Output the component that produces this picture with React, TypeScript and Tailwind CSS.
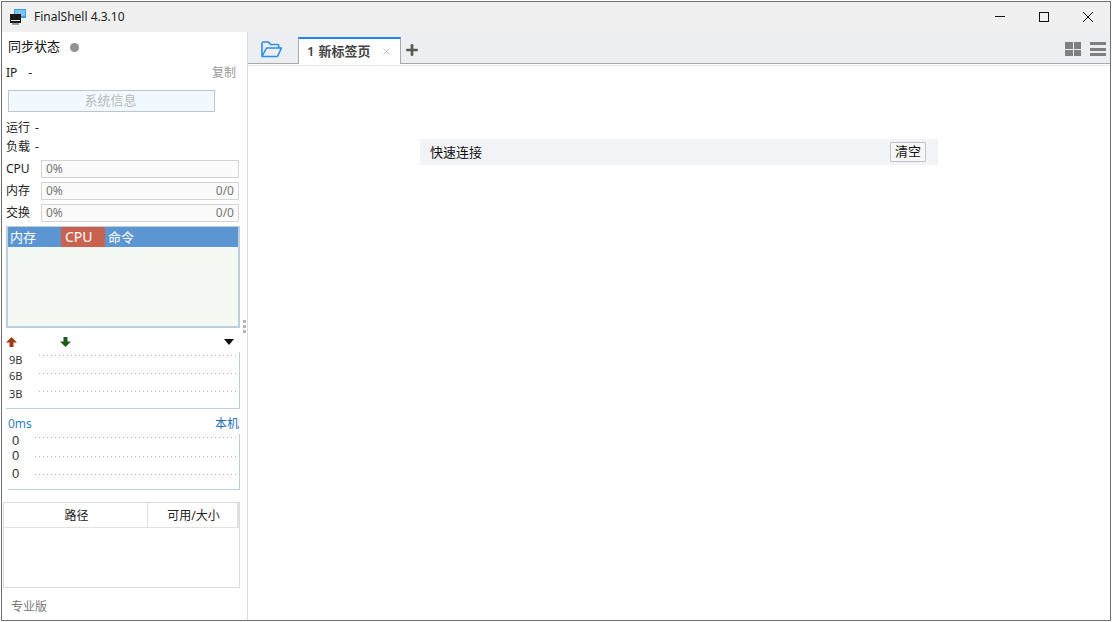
import { Plus, X } from "lucide-react";

const font = "font-['Noto_Sans','Noto_Sans_CJK_SC',sans-serif]";

function AppIcon() {
  return (
    <svg width="16" height="16" viewBox="0 0 16 16">
      <rect x="4" y="0" width="12" height="9" fill="#3f9be8" />
      <rect x="5" y="1" width="10" height="6" fill="#7cc4f8" />
      <rect x="0" y="5" width="11" height="9" fill="#1a1a1a" />
      <rect x="1" y="11" width="9" height="1" fill="#e8e8e8" />
      <rect x="2" y="14" width="7" height="2" fill="#9a9a9a" />
    </svg>
  );
}

function Bar({ label, right }: { label: string; right?: string }) {
  return (
    <div className="flex items-center h-[18px] mb-1 pl-[4px]">
      <span className="w-[35px] text-[12px] text-[#222]">{label}</span>
      <div className="w-[198px] h-[18px] flex items-center justify-between border border-[#d4d4d4] bg-[#fbfbfb] px-1 text-[12px] text-[#777]">
        <span>0%</span>
        {right && <span>{right}</span>}
      </div>
    </div>
  );
}

// dotted grid lines of the small monitors
function Dots({ left, right, rows }: { left: number; right: number; rows: number[] }) {
  return (
    <svg className="absolute inset-0 w-full h-full">
      {rows.map((y) => (
        <line key={y} x1={left} x2={right} y1={y + 0.5} y2={y + 0.5} stroke="#b5b5b5" strokeDasharray="1 3" />
      ))}
    </svg>
  );
}

function Sidebar() {
  return (
    <aside className="relative w-[246px] shrink-0 border-r border-[#dcdcdc] flex flex-col pt-[5px] text-[12px] text-[#222]">
      <div className="flex items-center h-[20px] pl-[6px] text-[13px] text-[#111]">
        同步状态
        <span className="ml-[10px] w-[9px] h-[9px] rounded-full bg-[#929292]" />
      </div>
      <div className="flex items-center justify-between h-[20px] mt-[6px] pl-[4px] pr-[11px]">
        <span>IP<span className="ml-[11px]">-</span></span>
        <span className="text-[#999]">复制</span>
      </div>
      <div className="ml-[6px] mt-[7px] w-[207px] h-[22px] flex items-center justify-center pr-[2px] border border-[#bfc5c8] bg-[#f1f9fe] text-[13px] text-[#b9b9b9]">
        系统信息
      </div>
      <div className="h-[19px] mt-[6px] pl-[4px] leading-[19px]">运行<span className="ml-[5px]">-</span></div>
      <div className="h-[19px] pl-[4px] leading-[19px] mb-[4px]">负载<span className="ml-[5px]">-</span></div>
      <Bar label="CPU" />
      <Bar label="内存" right="0/0" />
      <Bar label="交换" right="0/0" />
      <div className="ml-[4px] w-[234px] h-[102px] border-2 border-t-[1px] border-[#bcd0dc] flex flex-col bg-[#f4f9f4]">
        <div className="h-[20px] flex bg-[#5b96d3] text-[13px] text-white leading-[20px]">
          <span className="w-[53px] pl-[2px]">内存</span>
          <span className="w-[44px] pl-[4px] text-[14px] bg-[#c9624e]">CPU</span>
          <span className="pl-[3px]">命令</span>
        </div>
      </div>
      <div className="absolute left-[241px] top-[288px] flex flex-col gap-[2px]">
        <span className="w-[3px] h-[3px] bg-[#b4b4b4]" />
        <span className="w-[3px] h-[3px] bg-[#b4b4b4]" />
        <span className="w-[3px] h-[3px] bg-[#b4b4b4]" />
      </div>
      <div className="flex items-center justify-between h-[16px] mt-[6px] pl-[4px] pr-[13px]">
        <div className="flex">
          <svg width="11" height="10" viewBox="0 0 11 10"><path d="M5.500 0 11 5.500H7.500V10h-4V5.500H0z" fill="#a33a12" /></svg>
          <svg className="ml-[43px]" width="11" height="10" viewBox="0 0 11 10"><path d="M5.500 10 11 4.500H7.500V0h-4v4.500H0z" fill="#1f5a1a" /></svg>
        </div>
        <svg width="10" height="6" viewBox="0 0 10 6"><path d="M0 0h10L5 6z" fill="#111" /></svg>
      </div>
      <div className="relative ml-[4px] w-[234px] h-[57px] border-b border-r border-[#b9d0da] mt-[2px] pl-[3px] text-[11px] text-[#333]">
        <Dots left={33} right={230} rows={[3, 21, 39]} />
        <div className="h-[15px] leading-[15px]">9B</div>
        <div className="h-[17px] leading-[17px]">6B</div>
        <div className="h-[19px] leading-[19px]">3B</div>
      </div>
      <div className="flex items-center justify-between h-[20px] mt-[5px] pl-[6px] pr-[8px] text-[#2f7fbf]">
        <span>0ms</span>
        <span className="text-[#1f6fb0]">本机</span>
      </div>
      <div className="relative ml-[6px] w-[232px] h-[56px] border-b border-r border-[#b9d0da] pl-[4px] text-[13px] font-['Liberation_Sans',sans-serif] text-[#333]">
        <Dots left={27} right={228} rows={[3, 22, 40]} />
        <div className="h-[15px] leading-[15px] -mt-[1px]">0</div>
        <div className="h-[16px] leading-[16px]">0</div>
        <div className="h-[20px] leading-[20px]">0</div>
      </div>
      <div className="ml-[1px] mt-[12px] w-[237px] h-[86px] border border-[#dcdcdc] flex flex-col">
        <div className="h-[25px] shrink-0 flex border-b border-r-2 border-[#e2e2e2] text-[#222] leading-[26px]">
          <span className="w-[144px] pl-[2px] text-center border-r border-[#e2e2e2]">路径</span>
          <span className="flex-1 pl-[2px] text-center">可用/大小</span>
        </div>
      </div>
      <div className="h-[18px] mt-[10px] pl-[9px] leading-[18px] text-[#777]">专业版</div>
    </aside>
  );
}

function TabBar() {
  return (
    <div className="h-[32px] shrink-0 flex items-end bg-[#eceef2] border-b border-[#a9a9a9]">
      <svg className="ml-[11px] mb-[5px]" width="24" height="18" viewBox="0 0 24 18" fill="none" stroke="#2b8fe8" strokeWidth="1.6" strokeLinejoin="round">
        <path d="M3 16V3.500c0-.8.5-1.500 1.500-1.500h5l2 2.500h7c.8 0 1.200.5 1.200 1.200V8" />
        <path d="M3 16.500h15.500L22.500 8H7.500z" />
      </svg>
      <div className="ml-[15px] w-[103px] h-[27px] flex items-center justify-between bg-white border-t-2 border-t-[#1a86f0] border-x border-x-[#a9a9a9] px-2 -mb-px text-[13px] font-semibold text-[#444]">
        <span>1<span className="ml-[4px]">新标签页</span></span>
        <X size={11} strokeWidth={1.2} className="text-[#888]" />
      </div>
      <Plus size={16} strokeWidth={4} className="ml-[3px] mb-[5px] text-[#5a5a50]" />
      <div className="flex-1" />
      <div className="mb-[7px] grid grid-cols-2 gap-[1px] w-[16px] h-[14px]">
        <span className="bg-[#7f7f7f]" />
        <span className="bg-[#7f7f7f]" />
        <span className="bg-[#7f7f7f]" />
        <span className="bg-[#7f7f7f]" />
      </div>
      <div className="ml-[9px] mr-[4px] mb-[7px] w-[16px] h-[14px] flex flex-col justify-between">
        <span className="h-[3px] bg-[#7f7f7f]" />
        <span className="h-[3px] bg-[#7f7f7f]" />
        <span className="h-[3px] bg-[#7f7f7f]" />
      </div>
    </div>
  );
}

export default function App() {
  return (
    <div className="w-[1112px] h-[622px] p-px bg-white">
      <div className={`w-[1110px] h-[620px] border border-[#6e6e6e] flex flex-col bg-white overflow-hidden ${font}`}>
        <header className="h-[30px] shrink-0 flex items-center bg-[#f0f0f0]">
          <div className="ml-[8px] mr-[8px]">
            <AppIcon />
          </div>
          <span className="text-[12px] text-[#222]">FinalShell 4.3.10</span>
          <div className="ml-auto flex items-center">
            <div className="w-[44px] flex justify-center">
              <svg width="10" height="10" viewBox="0 0 10 10"><path d="M0 4.500h10" stroke="#111" /></svg>
            </div>
            <div className="w-[44px] flex justify-center">
              <svg width="10" height="10" viewBox="0 0 10 10"><rect x="0.500" y="0.500" width="9" height="9" fill="none" stroke="#111" /></svg>
            </div>
            <div className="w-[44px] flex justify-center">
              <svg width="10" height="10" viewBox="0 0 10 10"><path d="M0 0l10 10M10 0 0 10" stroke="#111" /></svg>
            </div>
          </div>
        </header>
        <div className="flex-1 flex min-h-0">
          <Sidebar />
          <main className="flex-1 flex flex-col min-w-0">
            <TabBar />
            <div className="flex-1 mt-px border-t border-[#e8e8e8] pt-[73px] pl-[172px]">
              <div className="w-[518px] h-[26px] flex items-center justify-between bg-[#f2f3f7] pl-[10px] pr-[12px] text-[13px] text-[#111]">
                <span className="pt-[2px]">快速连接</span>
                <button className="w-[36px] h-[20px] flex items-center justify-center border border-[#c4c4c4] bg-[#f7f7f7]">清空</button>
              </div>
            </div>
          </main>
        </div>
      </div>
    </div>
  );
}
